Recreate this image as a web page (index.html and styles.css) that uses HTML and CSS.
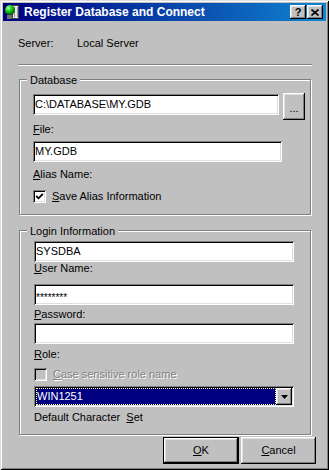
FILE: index.html
```html
<!DOCTYPE html>
<html lang="en">
<head>
  <meta charset="UTF-8">
  <title>Register Database and Connect</title>
  <link rel="stylesheet" href="styles.css">
</head>
<body>
  <div class="window">
    <div class="titlebar">
      <svg class="app-icon" width="16" height="16" viewBox="0 0 16 16">
        <defs>
          <radialGradient id="ball" cx="0.35" cy="0.3" r="0.75">
            <stop offset="0" stop-color="#d0ffd0"/>
            <stop offset="0.35" stop-color="#20e020"/>
            <stop offset="1" stop-color="#005000"/>
          </radialGradient>
        </defs>
        <rect x="8.5" y="1.5" width="6" height="13" fill="#e8e8e8" stroke="#404040"/>
        <rect x="10" y="3" width="1" height="10" fill="#909090"/>
        <rect x="13" y="3" width="1" height="10" fill="#a0a0a0"/>
        <rect x="3" y="11" width="5" height="4" fill="#707070"/>
        <circle cx="6" cy="6" r="5" fill="url(#ball)"/>
      </svg>
      <span class="title-text">Register Database and Connect</span>
      <div class="caption-btns">
        <div class="cap-btn help">?</div>
        <div class="cap-btn">
          <svg width="8" height="7" viewBox="0 0 8 7">
            <path d="M0.5 0.5L7.5 6.5M7.5 0.5L0.5 6.5" stroke="#000" stroke-width="1.6" fill="none"/>
          </svg>
        </div>
      </div>
    </div>

    <div class="content">
      <div class="server-row">
        <span class="server-label">Server:</span>
        <span>Local Server</span>
      </div>
      <div class="separator"></div>

      <div class="group group-db">
        <span class="legend">Database</span>
        <div class="path-row">
          <div class="edit edit-path">C:\DATABASE\MY.GDB</div>
          <div class="btn browse">...</div>
        </div>
        <div class="label label-file"><u>F</u>ile:</div>
        <div class="edit edit-alias">MY.GDB</div>
        <div class="label label-alias"><u>A</u>lias Name:</div>
        <div class="check-row check-save">
          <div class="checkbox">
            <svg width="9" height="9" viewBox="0 0 9 9">
              <polyline points="1.2,4 3.5,6.3 7.8,2" stroke="#000" stroke-width="1.8" fill="none"/>
            </svg>
          </div>
          <span><u>S</u>ave Alias Information</span>
        </div>
      </div>

      <div class="group group-login">
        <span class="legend">Login Information</span>
        <div class="edit edit-wide">SYSDBA</div>
        <div class="label"><u>U</u>ser Name:</div>
        <div class="edit edit-wide edit-pass"><span class="stars">********</span></div>
        <div class="label label-pass"><u>P</u>assword:</div>
        <div class="edit edit-wide edit-role"></div>
        <div class="label label-role"><u>R</u>ole:</div>
        <div class="check-row check-case disabled">
          <div class="checkbox checkbox-off"></div>
          <span><u>C</u>ase sensitive role name</span>
        </div>
        <div class="combo">
          <div class="combo-value">WIN1251</div>
          <div class="btn combo-btn">
            <svg width="7" height="4" viewBox="0 0 7 4">
              <polygon points="0,0 7,0 3.5,4" fill="#000"/>
            </svg>
          </div>
        </div>
        <div class="label label-charset">Default Character&nbsp; <u>S</u>et</div>
      </div>

      <div class="buttons">
        <div class="btn dlg-btn default"><span><u>O</u>K</span></div>
        <div class="btn dlg-btn"><span><u>C</u>ancel</span></div>
      </div>
    </div>
  </div>
</body>
</html>
```

FILE: styles.css
```css
body {
  margin: 0;
  font-family: "Liberation Sans", Arial, sans-serif;
  font-size: 11px;
  color: #000;
  background: #c0c0c0;
}
.window {
  width: 329px;
  height: 470px;
  box-sizing: border-box;
  padding: 3px;
  background: #c0c0c0;
  box-shadow: inset 1px 1px 0 #dfdfdf, inset -1px -1px 0 #000,
              inset 2px 2px 0 #fff, inset -2px -2px 0 #808080;
  line-height: 13px;
}
.titlebar {
  height: 18px;
  display: flex;
  align-items: center;
  background: linear-gradient(to right, #000080, #1084d0);
  color: #fff;
}
.app-icon {
  margin-left: 1px;
  flex: none;
}
.title-text {
  margin-left: 4px;
  font-weight: bold;
  font-size: 12px;
  white-space: nowrap;
}
.caption-btns {
  margin-left: auto;
  margin-right: 3px;
  display: flex;
  gap: 1px;
}
.cap-btn {
  width: 16px;
  height: 14px;
  box-sizing: border-box;
  background: #c0c0c0;
  color: #000;
  display: flex;
  align-items: center;
  justify-content: center;
  box-shadow: inset -1px -1px 0 #000, inset 1px 1px 0 #fff,
              inset -2px -2px 0 #808080, inset 2px 2px 0 #dfdfdf;
}
.cap-btn.help {
  font-weight: bold;
  font-size: 11px;
  line-height: 14px;
}
.content {
  padding: 0 14px 0 15px;
}
.server-row {
  display: flex;
  margin-top: 16px;
}
.server-label {
  width: 59px;
}
.separator {
  margin-top: 14px;
  height: 0;
  border-top: 1px solid #808080;
  border-bottom: 1px solid #fff;
}
.group {
  position: relative;
  margin: 0 1px;
  border: 1px solid #808080;
  box-shadow: inset 1px 1px 0 #fff, 1px 1px 0 #fff;
  padding-left: 13px;
}
.legend {
  position: absolute;
  left: 7px;
  top: -6px;
  padding: 0 3px;
  background: #c0c0c0;
}
.group-db {
  margin-top: 13px;
  padding-top: 13px;
  padding-bottom: 11px;
}
.group-login {
  margin-top: 15px;
  padding-top: 10px;
  padding-left: 14px;
  padding-bottom: 10px;
}
.edit {
  height: 21px;
  box-sizing: border-box;
  padding: 2px 2px;
  line-height: 17px;
  background: #fff;
  white-space: nowrap;
  overflow: hidden;
  box-shadow: inset 1px 1px 0 #808080, inset -1px -1px 0 #fff,
              inset 2px 2px 0 #000, inset -2px -2px 0 #dfdfdf;
}
.path-row {
  display: flex;
  align-items: flex-start;
}
.edit-path {
  width: 246px;
  margin-top: 1px;
}
.btn {
  background: #c0c0c0;
  box-sizing: border-box;
  display: flex;
  align-items: center;
  justify-content: center;
  box-shadow: inset -1px -1px 0 #000, inset 1px 1px 0 #fff,
              inset -2px -2px 0 #808080, inset 2px 2px 0 #dfdfdf;
}
.browse {
  width: 22px;
  height: 27px;
  margin-left: 4px;
  padding-top: 3px;
}
.label-file {
  margin-top: 3px;
}
.edit-alias {
  width: 249px;
  margin-top: 5px;
}
.label-alias {
  margin-top: 6px;
}
.check-row {
  display: flex;
  align-items: center;
  gap: 6px;
}
.check-save {
  margin-top: 9px;
}
.checkbox {
  width: 13px;
  height: 13px;
  box-sizing: border-box;
  background: #fff;
  display: flex;
  align-items: center;
  justify-content: center;
  box-shadow: inset 1px 1px 0 #808080, inset -1px -1px 0 #fff,
              inset 2px 2px 0 #000, inset -2px -2px 0 #dfdfdf;
}
.checkbox-off {
  background: #c0c0c0;
}
.edit-wide {
  width: 260px;
}
.edit-pass {
  margin-top: 9px;
}
.stars {
  vertical-align: -3px;
  font-size: 10px;
}
.label-pass {
  margin-top: 3px;
}
.edit-role {
  margin-top: 2px;
}
.label-role {
  margin-top: 4px;
}
.check-case {
  margin-top: 7px;
}
.disabled {
  color: #808080;
  text-shadow: 1px 1px 0 #fff;
}
.combo {
  width: 260px;
  height: 21px;
  margin-top: 5px;
  box-sizing: border-box;
  padding: 2px;
  display: flex;
  background: #fff;
  box-shadow: inset 1px 1px 0 #808080, inset -1px -1px 0 #fff,
              inset 2px 2px 0 #000, inset -2px -2px 0 #dfdfdf;
}
.combo-value {
  flex: 1;
  background: #000080;
  color: #fff;
  border: 1px dotted #ffff90;
  padding-left: 0;
  line-height: 15px;
}
.combo-btn {
  width: 16px;
  height: 17px;
}
.label-charset {
  margin-top: 4px;
}
.buttons {
  display: flex;
  justify-content: flex-end;
  gap: 2px;
  margin-top: 2px;
  margin-right: -4px;
}
.dlg-btn {
  width: 75px;
  height: 27px;
}
.dlg-btn.default {
  width: 76px;
  border: 1px solid #000;
}
```
